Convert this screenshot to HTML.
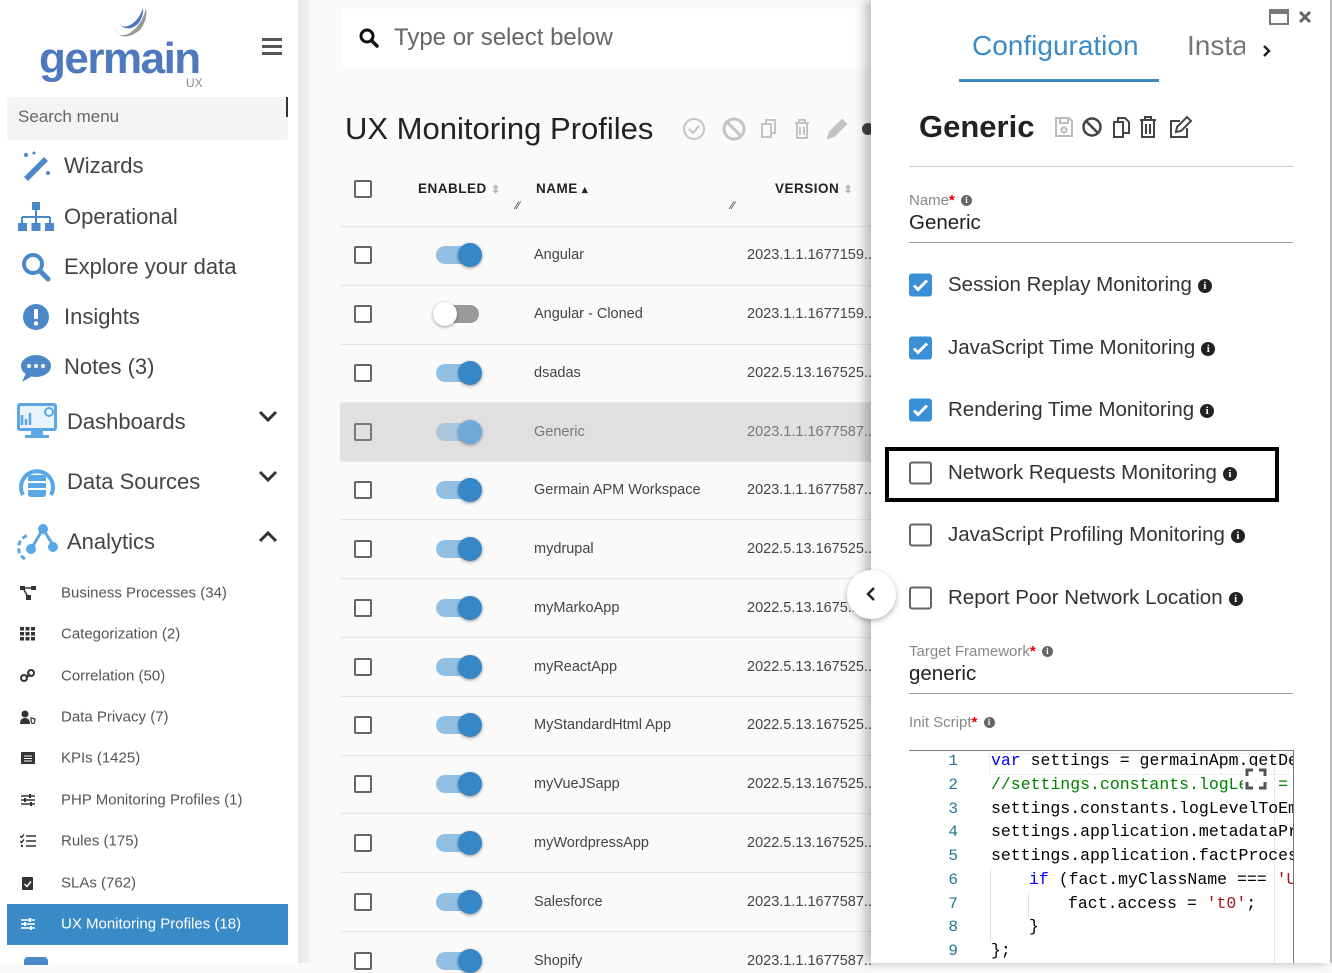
<!DOCTYPE html>
<html><head><meta charset="utf-8"><style>
*{margin:0;padding:0;box-sizing:border-box}
body{width:1332px;height:963px;overflow:hidden;position:relative;font-family:"Liberation Sans",sans-serif;background:#fafafa;color:#333}
.a{position:absolute;white-space:nowrap}
.side{position:absolute;left:0;top:0;width:298px;height:963px;background:#fff}
.gut{position:absolute;left:298px;top:0;width:12px;height:963px;background:linear-gradient(90deg,#e6e6e6,#f2f2f2)}
.mi{position:absolute;left:0;font-size:22px;color:#444;transform:translateY(-50%);white-space:nowrap}
.si{position:absolute;left:61px;font-size:15px;color:#555;transform:translateY(-50%);white-space:nowrap}
.sic{position:absolute;left:20px;width:16px;height:14px;transform:translateY(-50%)}
.cb{position:absolute;width:18px;height:18px;border:2px solid #666;border-radius:2px;background:#fff}
.row{position:absolute;left:340px;width:531px;height:59px;border-bottom:1px solid #e6e6e6}
.tg{position:absolute;left:436px;width:42px;height:18px;border-radius:9px;background:#92c0e4}
.kn{position:absolute;left:22px;top:-3px;width:24px;height:24px;border-radius:50%;background:#3687c8;box-shadow:0 1px 3px rgba(0,0,0,.4)}
.nm{position:absolute;left:534px;font-size:14.5px;color:#444;transform:translateY(-50%);white-space:nowrap}
.vr{position:absolute;left:747px;font-size:14.5px;color:#444;transform:translateY(-50%);white-space:nowrap}
.rcb{position:absolute;left:909px;width:23px;height:23px;border-radius:3px;transform:translateY(-50%)}
.on{background:#3a8fd6}
.off{border:2px solid #666;background:#fff}
.lbl{position:absolute;left:948px;font-size:20.5px;color:#333;transform:translateY(-50%);white-space:nowrap}
.inf{display:inline-block;width:14px;height:14px;border-radius:50%;background:#222;color:#fff;font-size:11px;font-weight:bold;text-align:center;line-height:14px;vertical-align:2px;margin-left:6px;font-family:"Liberation Serif",serif}
.fl{position:absolute;left:909px;font-size:15px;color:#888;white-space:nowrap}
.fl b{color:#e00}
.ln{position:absolute;left:930px;width:28px;text-align:right;font-family:"Liberation Mono",monospace;font-size:16px;color:#237893}
.cd{position:absolute;left:991px;font-family:"Liberation Mono",monospace;font-size:16.5px;color:#000;white-space:pre}
</style></head><body>
<div class="side">
 <svg class="a" style="left:108px;top:6px" width="42" height="40" viewBox="0 0 42 40"><path d="M6 22 Q14 38 32 24 Q40 14 38 2 Q34 20 20 28 Q10 32 6 22Z" fill="#999"/><path d="M10 16 Q18 28 30 18 Q36 10 35 2 Q30 16 20 20 Q14 22 10 16Z" fill="#4f79bf"/></svg>
 <div class="a" style="left:39px;top:34px;font-size:44px;font-weight:bold;color:#4f79bf;letter-spacing:-1.5px">germain</div>
 <div class="a" style="left:186px;top:76px;font-size:12px;color:#888">UX</div>
 <div class="a" style="left:262px;top:38px;width:20px;height:3px;background:#555;box-shadow:0 7px 0 #555,0 14px 0 #555"></div>
 <div class="a" style="left:7px;top:97px;width:281px;height:43px;background:#f4f4f4;border-radius:4px"></div>
 <div class="a" style="left:18px;top:107px;font-size:17px;color:#666">Search menu</div>
 <div class="a" style="left:286px;top:97px;width:2px;height:20px;background:#333"></div>

 <svg class="a" style="left:20px;top:151px" width="32" height="30" viewBox="0 0 32 30"><path d="M4 26 L20 10 L24 14 L8 30Z" fill="#4a88c7"/><path d="M20 10 L24 6 L28 10 L24 14Z" fill="#4a88c7"/><circle cx="6" cy="4" r="2" fill="#4a88c7"/><circle cx="14" cy="2" r="1.5" fill="#4a88c7"/><circle cx="28" cy="22" r="2" fill="#4a88c7"/></svg>
 <div class="mi" style="left:64px;top:166px">Wizards</div>
 <svg class="a" style="left:18px;top:202px" width="36" height="30" viewBox="0 0 36 30"><rect x="14" y="0" width="8" height="8" fill="#4a88c7"/><path d="M18 8v7M4 15h28M4 15v6M18 15v6M32 15v6" stroke="#4a88c7" stroke-width="2" fill="none"/><rect x="0" y="21" width="9" height="8" fill="#4a88c7"/><rect x="13.5" y="21" width="9" height="8" fill="#4a88c7"/><rect x="27" y="21" width="9" height="8" fill="#4a88c7"/></svg>
 <div class="mi" style="left:64px;top:217px">Operational</div>
 <svg class="a" style="left:21px;top:252px" width="30" height="30" viewBox="0 0 30 30"><circle cx="12" cy="12" r="9" stroke="#4a88c7" stroke-width="4" fill="none"/><path d="M19 19 L27 27" stroke="#4a88c7" stroke-width="5" stroke-linecap="round"/></svg>
 <div class="mi" style="left:64px;top:267px">Explore your data</div>
 <svg class="a" style="left:22px;top:303px" width="28" height="28" viewBox="0 0 28 28"><circle cx="14" cy="14" r="13" fill="#4a88c7"/><rect x="12" y="6" width="4" height="10" rx="1" fill="#fff"/><circle cx="14" cy="20.5" r="2.2" fill="#fff"/></svg>
 <div class="mi" style="left:64px;top:317px">Insights</div>
 <svg class="a" style="left:20px;top:353px" width="32" height="30" viewBox="0 0 32 30"><ellipse cx="16" cy="13" rx="15" ry="11" fill="#4a88c7"/><path d="M6 20 L2 29 L12 23Z" fill="#4a88c7"/><circle cx="9" cy="13" r="2" fill="#fff"/><circle cx="16" cy="13" r="2" fill="#fff"/><circle cx="23" cy="13" r="2" fill="#fff"/></svg>
 <div class="mi" style="left:64px;top:367px">Notes (3)</div>

 <svg class="a" style="left:17px;top:403px" width="40" height="36" viewBox="0 0 40 36"><rect x="0" y="0" width="40" height="28" rx="3" fill="#5aa7e6"/><rect x="3" y="3" width="34" height="22" fill="#e8f3fc"/><path d="M5 22V12M9 22V16M13 22V10" stroke="#5aa7e6" stroke-width="2.5"/><circle cx="32" cy="9" r="4" stroke="#5aa7e6" stroke-width="2" fill="none"/><rect x="14" y="28" width="12" height="4" fill="#5aa7e6"/><rect x="8" y="32" width="24" height="3" fill="#5aa7e6"/></svg>
 <div class="mi" style="left:67px;top:422px">Dashboards</div>
 <svg class="a" style="left:258px;top:409px" width="20" height="14" viewBox="0 0 20 14"><path d="M2 3 L10 11 L18 3" stroke="#333" stroke-width="3" fill="none"/></svg>
 <svg class="a" style="left:17px;top:463px" width="40" height="38" viewBox="0 0 40 38"><path d="M6 32 A16 16 0 1 1 34 32" stroke="#5aa7e6" stroke-width="4" fill="none"/><rect x="11" y="12" width="18" height="22" rx="3" fill="#5aa7e6"/><path d="M11 19h18M11 26h18" stroke="#fff" stroke-width="2"/></svg>
 <div class="mi" style="left:67px;top:482px">Data Sources</div>
 <svg class="a" style="left:258px;top:469px" width="20" height="14" viewBox="0 0 20 14"><path d="M2 3 L10 11 L18 3" stroke="#333" stroke-width="3" fill="none"/></svg>
 <svg class="a" style="left:17px;top:523px" width="42" height="38" viewBox="0 0 42 38"><path d="M8 36 A13 13 0 0 1 12 12" stroke="#5aa7e6" stroke-width="3" stroke-dasharray="5 3" fill="none"/><path d="M14 26 L26 6 L36 22" stroke="#5aa7e6" stroke-width="3" fill="none"/><circle cx="26" cy="6" r="5" fill="#5aa7e6"/><circle cx="14" cy="26" r="5" fill="#5aa7e6"/><circle cx="36" cy="24" r="5" fill="#5aa7e6"/></svg>
 <div class="mi" style="left:67px;top:542px">Analytics</div>
 <svg class="a" style="left:258px;top:530px" width="20" height="14" viewBox="0 0 20 14"><path d="M2 11 L10 3 L18 11" stroke="#333" stroke-width="3" fill="none"/></svg>

 <svg class="sic" style="top:593px" viewBox="0 0 16 14"><rect x="0" y="0" width="5" height="4" fill="#333"/><rect x="11" y="0" width="5" height="4" fill="#333"/><rect x="6" y="9" width="5" height="5" fill="#333"/><path d="M3 2h10M3 2l5 9" stroke="#333" stroke-width="1.5"/></svg>
 <div class="si" style="top:593px">Business Processes (34)</div>
 <svg class="sic" style="top:634px" viewBox="0 0 16 14"><g fill="#333"><rect x="0" y="0" width="4" height="3.5"/><rect x="5.5" y="0" width="4" height="3.5"/><rect x="11" y="0" width="4" height="3.5"/><rect x="0" y="5" width="4" height="3.5"/><rect x="5.5" y="5" width="4" height="3.5"/><rect x="11" y="5" width="4" height="3.5"/><rect x="0" y="10" width="4" height="3.5"/><rect x="5.5" y="10" width="4" height="3.5"/><rect x="11" y="10" width="4" height="3.5"/></g></svg>
 <div class="si" style="top:634px">Categorization (2)</div>
 <svg class="sic" style="top:676px" viewBox="0 0 16 14"><path d="M6 9 L10 5" stroke="#333" stroke-width="2"/><rect x="1" y="6" width="6" height="6" rx="3" transform="rotate(-45 4 9)" stroke="#333" stroke-width="2" fill="none"/><rect x="8" y="1" width="6" height="6" rx="3" transform="rotate(-45 11 4)" stroke="#333" stroke-width="2" fill="none"/></svg>
 <div class="si" style="top:676px">Correlation (50)</div>
 <svg class="sic" style="top:717px" viewBox="0 0 16 14"><circle cx="5" cy="4" r="3.5" fill="#333"/><path d="M0 14 Q0 8 5 8 Q10 8 10 14Z" fill="#333"/><path d="M11 8 L15 9 Q15 13 13 14 Q11 13 11 9Z" stroke="#333" stroke-width="1.2" fill="none"/></svg>
 <div class="si" style="top:717px">Data Privacy (7)</div>
 <svg class="sic" style="top:758px" viewBox="0 0 16 14"><rect x="1" y="1" width="14" height="12" rx="1" fill="#333"/><path d="M4 5h8M4 7.5h8M4 10h8" stroke="#fff" stroke-width="1"/></svg>
 <div class="si" style="top:758px">KPIs (1425)</div>
 <svg class="sic" style="top:800px" viewBox="0 0 16 14"><path d="M1 3h14M1 7h14M1 11h14" stroke="#333" stroke-width="1.5"/><rect x="9" y="1" width="2" height="4" fill="#333"/><rect x="4" y="5" width="2" height="4" fill="#333"/><rect x="10" y="9" width="2" height="4" fill="#333"/></svg>
 <div class="si" style="top:800px">PHP Monitoring Profiles (1)</div>
 <svg class="sic" style="top:841px" viewBox="0 0 16 14"><path d="M6 2h10M6 7h10M6 12h10M0 2l1.5 1.5L4 0.5M0 7l1.5 1.5L4 5.5" stroke="#333" stroke-width="1.4" fill="none"/><circle cx="2" cy="12" r="1.2" fill="#333"/></svg>
 <div class="si" style="top:841px">Rules (175)</div>
 <svg class="sic" style="top:883px" viewBox="0 0 16 14"><rect x="2" y="1" width="11" height="13" rx="1" fill="#333"/><path d="M4.5 8 L7 10.5 L11 5.5" stroke="#fff" stroke-width="1.5" fill="none"/></svg>
 <div class="si" style="top:883px">SLAs (762)</div>
 <div class="a" style="left:7px;top:904px;width:281px;height:41px;background:#3a8ac8"></div>
 <svg class="sic" style="top:924px" viewBox="0 0 16 14"><path d="M1 3h14M1 7h14M1 11h14" stroke="#fff" stroke-width="1.5"/><rect x="9" y="1" width="2" height="4" fill="#fff"/><rect x="4" y="5" width="2" height="4" fill="#fff"/><rect x="10" y="9" width="2" height="4" fill="#fff"/></svg>
 <div class="si" style="top:924px;color:#fff">UX Monitoring Profiles (18)</div>
 <div class="a" style="left:24px;top:957px;width:24px;height:8px;border-radius:4px 4px 0 0;background:#4a88c7"></div>
</div>
<div class="gut"></div>

<!-- main -->
<div class="a" style="left:341px;top:9px;width:540px;height:58px;background:#fff;border-radius:4px"></div>
<svg class="a" style="left:359px;top:28px" width="20" height="20" viewBox="0 0 20 20"><circle cx="8" cy="8" r="6" stroke="#111" stroke-width="3" fill="none"/><path d="M12.5 12.5 L18 18" stroke="#111" stroke-width="3.5" stroke-linecap="round"/></svg>
<div class="a" style="left:394px;top:24px;font-size:24px;color:#666">Type or select below</div>
<div class="a" style="left:345px;top:111px;font-size:31px;color:#222">UX Monitoring Profiles</div>
<svg class="a" style="left:682px;top:116px" width="190" height="26" viewBox="0 0 190 26"><g stroke="#c4c4c4" stroke-width="2" fill="none"><circle cx="12" cy="13" r="10"/><path d="M7 13l4 4 6-7"/><circle cx="52" cy="13" r="10" stroke-width="3"/><path d="M45 6l14 14" stroke-width="3"/><rect x="80" y="8" width="9" height="13"/><path d="M84 8V4h9v13h-4"/><path d="M113 7h14M117 7V4h6v3M115 7v15h10V7M118 11v8M122 11v8"/><path d="M146 22l2-6 12-12 4 4-12 12z" fill="#c4c4c4"/></g><circle cx="186" cy="13" r="6" fill="#444"/></svg>

<div class="cb" style="left:354px;top:180px"></div>
<div class="a" style="left:418px;top:181px;font-size:13.5px;font-weight:bold;color:#222;letter-spacing:.5px">ENABLED <span style="color:#bbb;font-size:11px">&#x2B0D;</span></div>
<div class="a" style="left:536px;top:181px;font-size:13.5px;font-weight:bold;color:#222;letter-spacing:.5px">NAME <span style="font-size:11px">&#x25B4;</span></div>
<div class="a" style="left:775px;top:181px;font-size:13.5px;font-weight:bold;color:#222;letter-spacing:.5px">VERSION <span style="color:#bbb;font-size:11px">&#x2B0D;</span></div>
<div class="a" style="left:516px;top:200px;font-size:11px;color:#333">&#x2215;&#x2215;</div>
<div class="a" style="left:731px;top:200px;font-size:11px;color:#333">&#x2215;&#x2215;</div>
<div class="row" style="top:167px;height:60px"></div>

<div class="row" style="top:227px"></div>
<div class="row" style="top:286px"></div>
<div class="row" style="top:344px"></div>
<div class="row" style="top:403px;background:#e0e0e0"></div>
<div class="row" style="top:461px"></div>
<div class="row" style="top:520px"></div>
<div class="row" style="top:579px"></div>
<div class="row" style="top:638px"></div>
<div class="row" style="top:697px"></div>
<div class="row" style="top:755px"></div>
<div class="row" style="top:814px"></div>
<div class="row" style="top:873px"></div>

<div class="cb" style="left:354px;top:246px"></div><div class="tg" style="top:246px"><div class="kn"></div></div><div class="nm" style="top:255px">Angular</div><div class="vr" style="top:255px">2023.1.1.1677159..</div>
<div class="cb" style="left:354px;top:305px"></div><div class="tg" style="top:305px;background:#999;left:441px;width:38px"><div class="kn" style="left:-8px;background:#fff"></div></div><div class="nm" style="top:314px">Angular - Cloned</div><div class="vr" style="top:314px">2023.1.1.1677159..</div>
<div class="cb" style="left:354px;top:364px"></div><div class="tg" style="top:364px"><div class="kn"></div></div><div class="nm" style="top:373px">dsadas</div><div class="vr" style="top:373px">2022.5.13.167525..</div>
<div class="cb" style="left:354px;top:423px;background:transparent;border-color:#777"></div><div class="tg" style="top:423px;background:#a9c6de"><div class="kn" style="background:#6ea9d8"></div></div><div class="nm" style="top:432px;color:#777">Generic</div><div class="vr" style="top:432px;color:#777">2023.1.1.1677587..</div>
<div class="cb" style="left:354px;top:481px"></div><div class="tg" style="top:481px"><div class="kn"></div></div><div class="nm" style="top:490px">Germain APM Workspace</div><div class="vr" style="top:490px">2023.1.1.1677587..</div>
<div class="cb" style="left:354px;top:540px"></div><div class="tg" style="top:540px"><div class="kn"></div></div><div class="nm" style="top:549px">mydrupal</div><div class="vr" style="top:549px">2022.5.13.167525..</div>
<div class="cb" style="left:354px;top:599px"></div><div class="tg" style="top:599px"><div class="kn"></div></div><div class="nm" style="top:608px">myMarkoApp</div><div class="vr" style="top:608px">2022.5.13.1675..</div>
<div class="cb" style="left:354px;top:658px"></div><div class="tg" style="top:658px"><div class="kn"></div></div><div class="nm" style="top:667px">myReactApp</div><div class="vr" style="top:667px">2022.5.13.167525..</div>
<div class="cb" style="left:354px;top:716px"></div><div class="tg" style="top:716px"><div class="kn"></div></div><div class="nm" style="top:725px">MyStandardHtml App</div><div class="vr" style="top:725px">2022.5.13.167525..</div>
<div class="cb" style="left:354px;top:775px"></div><div class="tg" style="top:775px"><div class="kn"></div></div><div class="nm" style="top:784px">myVueJSapp</div><div class="vr" style="top:784px">2022.5.13.167525..</div>
<div class="cb" style="left:354px;top:834px"></div><div class="tg" style="top:834px"><div class="kn"></div></div><div class="nm" style="top:843px">myWordpressApp</div><div class="vr" style="top:843px">2022.5.13.167525..</div>
<div class="cb" style="left:354px;top:893px"></div><div class="tg" style="top:893px"><div class="kn"></div></div><div class="nm" style="top:902px">Salesforce</div><div class="vr" style="top:902px">2023.1.1.1677587..</div>
<div class="cb" style="left:354px;top:952px"></div><div class="tg" style="top:952px"><div class="kn"></div></div><div class="nm" style="top:961px">Shopify</div><div class="vr" style="top:961px">2023.1.1.1677587..</div>

<!-- right panel -->
<div class="a" style="left:871px;top:0;width:461px;height:963px;background:#fff;box-shadow:-6px 0 10px rgba(0,0,0,.25);border-right:2px solid #bbb"></div>
<div class="a" style="left:847px;top:570px;width:49px;height:49px;border-radius:50%;background:#fff;box-shadow:0 2px 6px rgba(0,0,0,.3)"></div>
<svg class="a" style="left:865px;top:586px" width="12" height="16" viewBox="0 0 12 16"><path d="M9 2 L3 8 L9 14" stroke="#222" stroke-width="2.5" fill="none"/></svg>
<div class="a" style="left:1269px;top:9px;width:20px;height:16px;border:2px solid #777;border-top-width:5px"></div>
<svg class="a" style="left:1298px;top:10px" width="14" height="14" viewBox="0 0 14 14"><path d="M2 2L12 12M12 2L2 12" stroke="#666" stroke-width="3"/></svg>
<div class="a" style="left:972px;top:30px;font-size:28px;color:#3a8ac8">Configuration</div>
<div class="a" style="left:959px;top:79px;width:200px;height:3px;background:#3a8ac8"></div>
<div class="a" style="left:1187px;top:30px;font-size:28px;color:#777;width:58px;overflow:hidden">Installation</div>
<svg class="a" style="left:1262px;top:44px" width="10" height="14" viewBox="0 0 10 14"><path d="M2 2L7 7L2 12" stroke="#222" stroke-width="2.5" fill="none"/></svg>
<div class="a" style="left:919px;top:109px;font-size:31px;font-weight:bold;color:#222">Generic</div>
<svg class="a" style="left:1054px;top:115px" width="140" height="24" viewBox="0 0 140 24"><g fill="none" stroke-width="2"><path d="M2 3h13l3 3v15H2z M6 3v5h8V3" stroke="#bbb"/><circle cx="10" cy="15" r="2.5" stroke="#bbb"/><circle cx="38" cy="12" r="8.5" stroke="#444" stroke-width="2.5"/><path d="M32 6l12 12" stroke="#444" stroke-width="2.5"/><rect x="60" y="7" width="9" height="15" stroke="#444"/><path d="M64 7V3h7l4 4v11h-6" stroke="#444"/><path d="M86 5h16M91 5V2h6v3M88 5v17h12V5M92 9v10M96 9v10" stroke="#444"/><path d="M126 6h-9v16h16v-9" stroke="#444"/><path d="M122 17l1-5 10-10 4 4-10 10z" stroke="#444"/></g></svg>
<div class="a" style="left:909px;top:166px;width:384px;height:1px;background:#ccc"></div>
<div class="fl" style="top:192px">Name<b>*</b> <span class="inf" style="width:11px;height:11px;line-height:11px;font-size:9px;background:#666;margin-left:2px">i</span></div>
<div class="a" style="left:909px;top:211px;font-size:20.5px;color:#222">Generic</div>
<div class="a" style="left:909px;top:242px;width:384px;height:1px;background:#999"></div>

<div class="rcb on" style="top:285px"><svg width="23" height="23" viewBox="0 0 23 23"><path d="M5 12l4 4 9-9" stroke="#fff" stroke-width="3" fill="none"/></svg></div>
<div class="lbl" style="top:285px">Session Replay Monitoring<span class="inf">i</span></div>
<div class="rcb on" style="top:348px"><svg width="23" height="23" viewBox="0 0 23 23"><path d="M5 12l4 4 9-9" stroke="#fff" stroke-width="3" fill="none"/></svg></div>
<div class="lbl" style="top:348px">JavaScript Time Monitoring<span class="inf">i</span></div>
<div class="rcb on" style="top:410px"><svg width="23" height="23" viewBox="0 0 23 23"><path d="M5 12l4 4 9-9" stroke="#fff" stroke-width="3" fill="none"/></svg></div>
<div class="lbl" style="top:410px">Rendering Time Monitoring<span class="inf">i</span></div>
<div class="a" style="left:885px;top:447px;width:394px;height:55px;border:4px solid #000"></div>
<div class="rcb off" style="top:473px"></div>
<div class="lbl" style="top:473px">Network Requests Monitoring<span class="inf">i</span></div>
<div class="rcb off" style="top:535px"></div>
<div class="lbl" style="top:535px">JavaScript Profiling Monitoring<span class="inf">i</span></div>
<div class="rcb off" style="top:598px"></div>
<div class="lbl" style="top:598px">Report Poor Network Location<span class="inf">i</span></div>

<div class="fl" style="top:643px">Target Framework<b>*</b> <span class="inf" style="width:11px;height:11px;line-height:11px;font-size:9px;background:#666;margin-left:2px">i</span></div>
<div class="a" style="left:909px;top:662px;font-size:20.5px;color:#222">generic</div>
<div class="a" style="left:909px;top:693px;width:384px;height:1px;background:#999"></div>
<div class="fl" style="top:714px">Init Script<b>*</b> <span class="inf" style="width:11px;height:11px;line-height:11px;font-size:9px;background:#666;margin-left:2px">i</span></div>

<div class="a" style="left:909px;top:750px;width:385px;height:213px;border-top:1px solid #777;border-right:1px solid #777;overflow:hidden">
 <div class="a" style="left:80px;top:2px;width:300px;height:22px;border:1px solid #eee"></div>
 <div class="a" style="left:365px;top:0;width:1px;height:213px;background:#e6e6e6"></div>
 <div class="a" style="left:81px;top:118px;width:1px;height:72px;background:#ddd"></div>
 <div class="a" style="left:119px;top:142px;width:1px;height:24px;background:#ddd"></div>
</div>
<div class="ln" style="top:752px">1</div><div class="ln" style="top:776px">2</div><div class="ln" style="top:800px">3</div><div class="ln" style="top:823px">4</div><div class="ln" style="top:847px">5</div><div class="ln" style="top:871px">6</div><div class="ln" style="top:895px">7</div><div class="ln" style="top:918px">8</div><div class="ln" style="top:942px">9</div>
<div style="position:absolute;left:991px;top:750px;width:302px;height:213px;overflow:hidden">
<div class="cd" style="left:0;top:1px"><span style="color:#00f">var</span> settings = germainApm.getDefaultSettings();</div>
<div class="cd" style="left:0;top:25px;color:#008000">//settings.constants.logLe<span style="color:#fff">xxx</span>= 0;</div>
<div class="cd" style="left:0;top:49px">settings.constants.logLevelToEmit</div>
<div class="cd" style="left:0;top:72px">settings.application.metadataProvider</div>
<div class="cd" style="left:0;top:96px">settings.application.factProcessor</div>
<div class="cd" style="left:38px;top:120px"><span style="color:#00f">if</span> (fact.myClassName === <span style="color:#a31515">'UserClick'</span></div>
<div class="cd" style="left:77px;top:144px">fact.access = <span style="color:#a31515">'t0'</span>;</div>
<div class="cd" style="left:38px;top:167px">}</div>
<div class="cd" style="left:0;top:191px">};</div>
</div>
<div class="a" style="left:1243px;top:766px;width:26px;height:26px;background:#fff"></div>
<svg class="a" style="left:1245px;top:768px" width="22" height="22" viewBox="0 0 22 22"><path d="M2 8V2h6M14 2h6v6M20 14v6h-6M8 20H2v-6" stroke="#555" stroke-width="3" fill="none"/></svg>
</body></html>
